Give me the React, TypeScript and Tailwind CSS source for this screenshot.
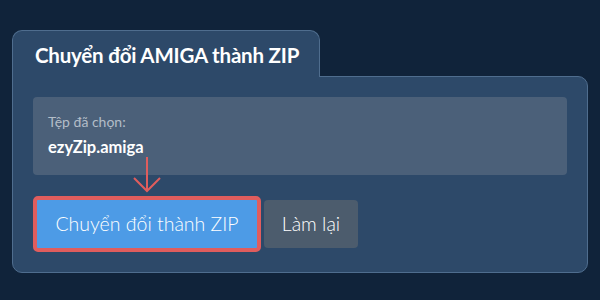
export default function App() {
  return (
    <div className="w-[600px] h-[300px] bg-[#10233a] pt-[30px] px-[12px] font-['Lato',sans-serif] text-white">
      <div className="relative z-10 -mb-px w-[308px] h-[47px] bg-[#2d4969] border border-b-0 border-[#4f6d8e] rounded-t-[10px] pl-[22px] pt-[12px]">
        <div className="text-[20.5px] font-bold leading-[24px] tracking-[-0.2px]">Chuyển đổi AMIGA thành ZIP</div>
      </div>
      <div className="w-[576px] h-[197px] bg-[#2d4969] border border-[#4f6d8e] rounded-b-[10px] rounded-tr-[10px] p-5">
        <div className="h-[78px] bg-[#4b6079] rounded-[4px] px-[15px] pt-[16px]">
          <div className="text-[14px] leading-[17px] text-[#b3bdc8]">Tệp đã chọn:</div>
          <div className="mt-[7px] text-[16.5px] font-bold leading-[20px]">ezyZip.amiga</div>
        </div>
        <div className="flex items-center gap-[3px] mt-[21px]">
          <div className="relative">
            <svg width="30" height="36" viewBox="0 0 30 36" className="absolute left-[99px] -top-[39px]" fill="none" stroke="#e05d5d" strokeWidth="2">
              <path d="M15 0 V34" />
              <path d="M2 21 L15 34 L28 21" />
            </svg>
            <button className="h-[56px] w-[228px] border-4 border-[#e05d5d] rounded-[5px] bg-[#4d9be6] text-[19.5px] font-light leading-none text-white">
              Chuyển đổi thành ZIP
            </button>
          </div>
          <button className="h-[48px] w-[94px] rounded-[4px] bg-[#4c5c6d] text-[19.5px] font-light leading-none text-white">
            Làm lại
          </button>
        </div>
      </div>
    </div>
  )
}
